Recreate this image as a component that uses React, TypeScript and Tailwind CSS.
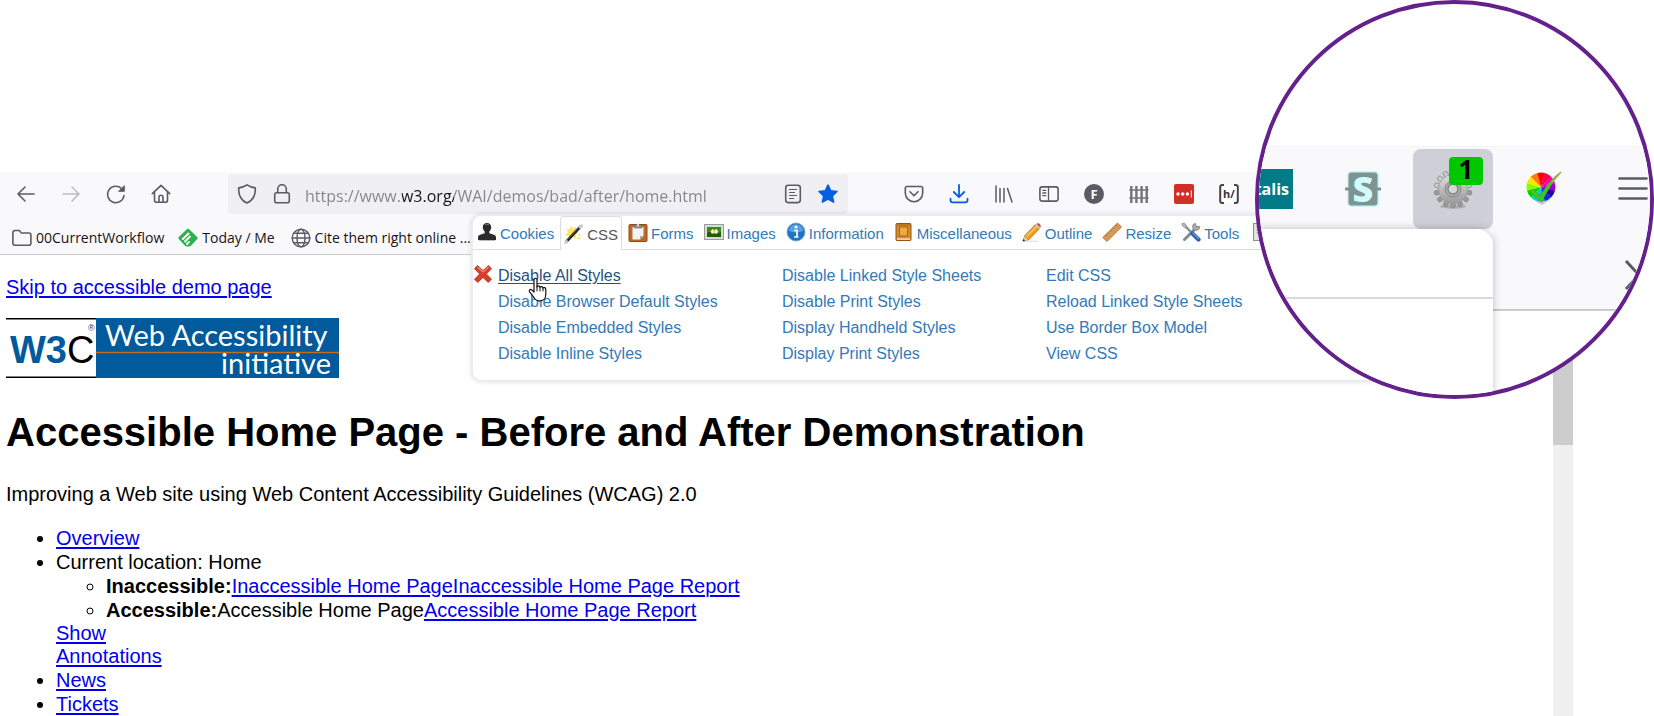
import type { ReactNode } from "react";

const LINE = "#5b5b66";

function Stroke({ children, color = LINE, size = 20, width = 1.6 }: { children: ReactNode; color?: string; size?: number; width?: number }) {
  return (
    <svg width={size} height={size} viewBox="0 0 20 20" fill="none" stroke={color} strokeWidth={width} strokeLinecap="round" strokeLinejoin="round" aria-hidden="true">
      {children}
    </svg>
  );
}

function IconButton({ label, children }: { label: string; children: ReactNode }) {
  return (
    <button type="button" aria-label={label} className="flex h-10 w-[45px] shrink-0 items-center justify-center">
      {children}
    </button>
  );
}

const tabs: { name: string; icon: ReactNode }[] = [
  {
    name: "Cookies",
    icon: (
      <svg width="20" height="20" viewBox="0 0 20 20" aria-hidden="true">
        <path d="M10 1c2.600 0 4.200 1.800 4.200 4.200 0 2-1 3.300-1.900 4.400v1.600l4.700 1.500c1.200.4 2 1.300 2 2.600V18H1v-2.700c0-1.300.8-2.200 2-2.600l4.700-1.500V9.600C6.800 8.500 5.800 7.200 5.800 5.200 5.800 2.800 7.400 1 10 1z" fill="#2b2b2b" />
        <path d="M8 3c1-.9 3-.9 4 0" stroke="#777" fill="none" />
        <path d="M2 18.500h16" stroke="#bbb" />
      </svg>
    ),
  },
  {
    name: "CSS",
    icon: (
      <svg width="20" height="20" viewBox="0 0 20 20" aria-hidden="true">
        <path d="M7 1l1.600 3.500L12 3l-.5 4 3.500 2-3.500 1.500 1 4-4-1.500L5 16l-.3-4L1 11l3-2.200L2.500 5 6 5.500z" fill="#ffe45c" />
        <path d="M15 10l1.500 2.500M13 14l3 1" stroke="#ffd22e" />
        <path d="M2 18L16.500 2.500" stroke="#222" strokeWidth="2.800" />
        <path d="M2.500 16.500L15 3" stroke="#888" strokeWidth=".7" />
        <path d="M15 4l3.500-3.200M1 19.300l2.500-2.800" stroke="#c9c9c9" strokeWidth="2.800" />
      </svg>
    ),
  },
  {
    name: "Forms",
    icon: (
      <svg width="20" height="20" viewBox="0 0 20 20" aria-hidden="true">
        <rect x="1" y="2.500" width="18" height="17" rx="1" fill="#b86a28" stroke="#8f4c18" />
        <path d="M4.500 5h11v9l-3.500 3.500H4.500z" fill="#f3f3f1" />
        <path d="M12 17.500V14h3.500z" fill="#aaa" />
        <path d="M6 6V3.500h2.200a1.900 1.900 0 013.600 0H14V6z" fill="#9a9a98" stroke="#666" strokeWidth=".6" />
        <circle cx="10" cy="3" r=".9" fill="#fff" />
      </svg>
    ),
  },
  {
    name: "Images",
    icon: (
      <svg width="20" height="20" viewBox="0 0 20 20" aria-hidden="true">
        <rect x=".5" y="2.500" width="19" height="15" fill="#d9dbd6" stroke="#9b9d98" />
        <rect x="3" y="5" width="14" height="10" fill="#3f8a1c" />
        <path d="M3 11c4-3 9 3 14-1v5H3z" fill="#1f5d0c" />
        <path d="M6.500 9.500l2-2.500 1.800 1.300L12.500 7l1.800 2.500-1.500 2.300-2.500-.6-2.500.6z" fill="#f5f5ec" />
        <circle cx="10.300" cy="9.500" r="1.200" fill="#e8d23a" />
      </svg>
    ),
  },
  {
    name: "Information",
    icon: (
      <svg width="20" height="20" viewBox="0 0 20 20" aria-hidden="true">
        <circle cx="10" cy="10" r="9" fill="#1d73c4" stroke="#7fa6cc" />
        <path d="M2.500 8.500a7.600 7.600 0 0115 0c-4 2.500-11 2.500-15 0z" fill="#5aa0e0" />
        <circle cx="10" cy="5" r="1.500" fill="#fff" />
        <path d="M8 8.500h3v6.500M8 15h4.500" stroke="#fff" strokeWidth="1.700" fill="none" />
      </svg>
    ),
  },
  {
    name: "Miscellaneous",
    icon: (
      <svg width="20" height="20" viewBox="0 0 20 20" aria-hidden="true">
        <rect x="2" y="1.500" width="15" height="17" rx="1" fill="#d08a30" stroke="#935510" />
        <path d="M3 17h13" stroke="#f7ead2" strokeWidth="1.400" />
        <rect x="5.500" y="5" width="8" height="9" fill="#eda944" stroke="#a96512" />
        <path d="M3 3h13" stroke="#a96512" />
      </svg>
    ),
  },
  {
    name: "Outline",
    icon: (
      <svg width="20" height="20" viewBox="0 0 20 20" aria-hidden="true">
        <path d="M2 19.300h14" stroke="#ddd" />
        <path d="M2.500 14L13.500 2.500l4 4L6.500 18z" fill="#f59a1d" stroke="#b96b0c" strokeWidth=".8" />
        <path d="M4.500 14.500l11-11" stroke="#ffd07a" strokeWidth="1.300" />
        <path d="M2.500 14l4 4L.8 19.300z" fill="#ead2a6" stroke="#a98245" strokeWidth=".5" />
        <path d="M1.500 17l1.500 1.500-2.400.9z" fill="#222" />
        <path d="M13 3l1.300-1.300 4 4L17 7z" fill="#c3c9cc" />
        <path d="M14.300 1.700C16 0 20 2.500 18.300 5.700z" fill="#d94848" />
      </svg>
    ),
  },
  {
    name: "Resize",
    icon: (
      <svg width="20" height="20" viewBox="0 0 20 20" aria-hidden="true">
        <path d="M.8 15.500L15.500 1l4 4L5 19.500z" fill="#d99a55" stroke="#a9682a" strokeWidth=".8" />
        <path d="M3.500 13l1.300 1.300M6 10.500l1 1M8.500 8l1.300 1.300M11 5.500l1 1M13.500 3l1.300 1.300" stroke="#8a5220" strokeWidth=".8" />
      </svg>
    ),
  },
  {
    name: "Tools",
    icon: (
      <svg width="20" height="20" viewBox="0 0 20 20" aria-hidden="true">
        <path d="M16 5L3.500 17.500" stroke="#848a8b" strokeWidth="3" strokeLinecap="round" />
        <path d="M18.700 4.500a3.600 3.600 0 11-4.300-3.200l.4 2.700 1.800.6z" fill="#a8acad" stroke="#6c7071" strokeWidth=".6" />
        <path d="M3 3l8 8" stroke="#888d8e" strokeWidth="2.400" />
        <path d="M1 1.500l2.500-.3L6 4.500 4.500 6 1.200 3.600z" fill="#b8bcbd" stroke="#6c7071" strokeWidth=".6" />
        <path d="M11.500 11.500l6 6" stroke="#2a5fae" strokeWidth="4.200" strokeLinecap="round" />
        <path d="M12 11l5.500 5.500" stroke="#6f9fdc" strokeWidth="1.200" strokeLinecap="round" />
      </svg>
    ),
  },
];

const commands = [
  ["Disable All Styles", "Disable Browser Default Styles", "Disable Embedded Styles", "Disable Inline Styles"],
  ["Disable Linked Style Sheets", "Disable Print Styles", "Display Handheld Styles", "Display Print Styles"],
  ["Edit CSS", "Reload Linked Style Sheets", "Use Border Box Model", "View CSS"],
];

function HandCursor() {
  return (
    <svg className="pointer-events-none absolute top-[10px] left-[30px] z-10" width="20" height="25" viewBox="0 0 20 25" aria-hidden="true">
      <path
        d="M6 15V3.200C6 .6 9 .6 9 3.200V10c.2-1.700 2.900-1.500 3 .4.500-1.400 2.800-1 2.900.8.600-1.200 2.900-.8 2.900 1.200V17c0 4-2.300 6.800-5.600 6.800H11c-2.500 0-4-1.300-5.200-3.500L1.500 14.700c-.8-1.500.9-2.900 2.300-1.800z"
        fill="#fff"
        stroke="#111"
        strokeWidth="1.200"
        strokeLinejoin="round"
      />
      <path d="M9 9.500V14M12 10.500V14M15 11.500V14" stroke="#111" strokeWidth="1" strokeLinecap="round" />
    </svg>
  );
}

function DeveloperPanel() {
  return (
    <section
      aria-label="Web Developer"
      className="absolute top-[42px] left-[471px] z-10 w-[960px] rounded-[10px] border-2 border-[#ececf0] bg-white pb-[13px] font-['Liberation_Sans',Arial,sans-serif] shadow-[0_0_5px_rgba(0,0,0,0.12)]"
    >
      <div role="tablist" className="flex h-[34px] items-end gap-[2px] border-b border-[#ddd]">
        {tabs.map((tab) => {
          const active = tab.name === "CSS";
          return (
            <button
              key={tab.name}
              type="button"
              role="tab"
              aria-selected={active}
              className={
                active
                  ? "-mb-px flex h-[34px] shrink-0 items-center gap-[3px] rounded-t-[4px] border border-b-0 border-[#ddd] bg-white px-[3px] text-[15px] text-[#555]"
                  : "flex h-[34px] shrink-0 items-center gap-[3px] border border-transparent px-[3px] text-[15px] text-[#337ab7]"
              }
            >
              {tab.icon}
              <span className="pt-1">{tab.name}</span>
            </button>
          );
        })}
        <button type="button" role="tab" aria-selected={false} aria-label="View Source" className="flex h-[34px] shrink-0 items-center pl-2">
          <svg width="20" height="20" viewBox="0 0 20 20" aria-hidden="true">
            <rect x=".5" y="1.500" width="15" height="17" fill="#e2e2e2" stroke="#8d8d8d" />
            <path d="M3.500 5h9M3.500 8h9M3.500 11h9" stroke="#999" />
          </svg>
        </button>
      </div>
      <div className="relative grid grid-cols-[284px_264px_1fr] pt-[13px] pl-[25px] text-[16px] leading-[26px]">
        <svg className="absolute top-[14px] left-0" width="20" height="20" viewBox="0 0 20 20" aria-hidden="true">
          <path d="M4.500 1.500L10 6.500l5.500-5 3 3.300L13.300 10l5.200 5.200-3.200 3.200L10 13.400l-5.300 5-3.200-3.200L6.700 10 1.500 4.800z" fill="#d6402a" stroke="#a82414" strokeWidth=".8" />
          <path d="M4.500 3l5.500 5 5.500-5" stroke="#f08a76" strokeWidth="1.200" fill="none" />
        </svg>
        {commands.map((column) => (
          <ul key={column[0]}>
            {column.map((command) => (
              <li key={command}>
                {command === "Disable All Styles" ? (
                  <a href="#disable" className="relative text-[#23527c] underline underline-offset-2">
                    {command}
                    <HandCursor />
                  </a>
                ) : (
                  <a href="#command" className="text-[#337ab7]">
                    {command}
                  </a>
                )}
              </li>
            ))}
          </ul>
        ))}
      </div>
    </section>
  );
}

function NavigationBar() {
  return (
    <div className="flex h-[44px] items-center bg-[#f9f9fb] pl-[3px]">
      <IconButton label="Back">
        <Stroke><path d="M18 10H2M9 3l-7 7 7 7" /></Stroke>
      </IconButton>
      <IconButton label="Forward">
        <Stroke color="#bdbdc2"><path d="M2 10h16M11 3l7 7-7 7" /></Stroke>
      </IconButton>
      <IconButton label="Reload">
        <Stroke>
          <path d="M18 11.500A8.200 8.200 0 1115.500 4.500" />
          <path d="M18.300 2v5.300H13z" fill={LINE} strokeWidth="1" />
        </Stroke>
      </IconButton>
      <IconButton label="Home">
        <Stroke>
          <path d="M1.300 9.700L10 1.300l8.700 8.400M3.500 8v8.200a2 2 0 002 2h9a2 2 0 002-2V8M8 18v-4.700a2 2 0 014 0V18" />
        </Stroke>
      </IconButton>
      <div className="ml-[45px] flex h-10 w-[620px] shrink-0 items-center rounded bg-[#f0f0f4]">
        <button type="button" aria-label="Tracking protection" className="ml-[9px]">
          <Stroke><path d="M10 .9c2.500 1.800 5 2.600 8.300 3 .4 7-2.300 12.500-8.300 15.200C4 16.400 1.300 10.900 1.700 3.900 5 3.500 7.500 2.700 10 .9z" /></Stroke>
        </button>
        <button type="button" aria-label="Site information" className="ml-[15px]">
          <Stroke>
            <rect x="2.700" y="8.700" width="14.600" height="10" rx="2" />
            <path d="M5.700 8.500V5a4.300 4.300 0 018.600 0v3.500" />
          </Stroke>
        </button>
        <input
          aria-label="Address"
          defaultValue="https://www.w3.org/WAI/demos/bad/after/home.html"
          className="ml-[13px] min-w-0 flex-1 bg-[linear-gradient(90deg,#84848c_97px,#15141a_97px,#15141a_149px,#84848c_149px)] bg-clip-text pt-[3px] font-['Open_Sans','Noto_Sans',sans-serif] text-[16px] text-transparent outline-none"
        />
        <button type="button" aria-label="Reader view" className="mr-[15px]">
          <Stroke>
            <rect x="2.700" y="1.200" width="14.600" height="17.400" rx="2.500" />
            <path d="M6.500 5.500h7M6.500 8.500h5M6.500 11.500h7M6.500 14.500h4" strokeWidth="1.200" />
          </Stroke>
        </button>
        <button type="button" aria-label="Bookmark this page" className="mr-[10px]">
          <Stroke color="#0060df"><path d="M10 1l2.700 5.800 6.300.7-4.700 4.300 1.300 6.300L10 15l-5.600 3.100 1.300-6.300L1 7.500l6.300-.7z" fill="#0060df" /></Stroke>
        </button>
      </div>
      <div className="ml-[43px] flex">
        <IconButton label="Save to Pocket">
          <Stroke>
            <path d="M3 2.500h14c1 0 1.700.7 1.700 1.700V9a8.700 8.700 0 01-17.400 0V4.200c0-1 .7-1.700 1.700-1.700z" />
            <path d="M6 7.700l4 4 4-4" />
          </Stroke>
        </IconButton>
        <IconButton label="Downloads">
          <Stroke color="#0060df" width={1.800}>
            <path d="M10 .9v12M4.800 8l5.200 5.200L15.200 8M1.500 14.700v1.500c0 1.200.8 2.100 2.100 2.100h12.800c1.300 0 2.100-.9 2.100-2.100v-1.500" />
          </Stroke>
        </IconButton>
        <IconButton label="Library">
          <Stroke width={1.500}><path d="M2 2v16M6 4.500V18M10 4.500V18M13.500 4.500l4.500 13.500" /></Stroke>
        </IconButton>
        <IconButton label="Sidebars">
          <Stroke>
            <rect x=".9" y="2.900" width="18.200" height="14.200" rx="2.300" />
            <path d="M9.500 3v14M3.800 6.300h3M3.800 9h3M3.800 11.700h3" strokeWidth="1.300" />
          </Stroke>
        </IconButton>
        <IconButton label="Font inspector">
          <svg width="20" height="20" viewBox="0 0 20 20" aria-hidden="true">
            <circle cx="10" cy="10" r="10" fill={LINE} />
            <text x="10" y="14.800" textAnchor="middle" fontFamily="Open Sans, sans-serif" fontWeight="700" fontSize="13" fill="#fff">F</text>
          </svg>
        </IconButton>
        <IconButton label="Grid">
          <Stroke color="#757575" width={1.900}><path d="M2.300 2v17M7.400 2v17M12.600 2v17M17.700 2v17" strokeLinecap="butt" strokeWidth="2.400" /><path d="M.8 6h18.400M.8 14h18.400" strokeWidth="1.300" /></Stroke>
        </IconButton>
        <IconButton label="Password manager">
          <svg width="20" height="20" viewBox="0 0 20 20" aria-hidden="true">
            <rect width="20" height="20" rx="2" fill="#d32d27" />
            <circle cx="4" cy="10" r="1.700" fill="#fff" />
            <circle cx="8.700" cy="10" r="1.700" fill="#fff" />
            <circle cx="13.400" cy="10" r="1.700" fill="#fff" />
            <path d="M17.300 6.500v7" stroke="#fff" strokeWidth="1" />
          </svg>
        </IconButton>
        <IconButton label="HeadingsMap">
          <svg width="20" height="20" viewBox="0 0 20 20" aria-hidden="true">
            <rect x="2" y="1" width="16" height="18" fill="#fff" />
            <path d="M5 1H3.500C2 1 1.200 1.800 1.200 3.300v13.400C1.200 18.200 2 19 3.500 19H5M15 1h1.500c1.500 0 2.300.8 2.300 2.300v13.400c0 1.500-.8 2.300-2.300 2.300H15" fill="none" stroke="#444" strokeWidth="2" />
            <text x="10" y="14" textAnchor="middle" fontFamily="Open Sans, sans-serif" fontWeight="700" fontSize="11" fill="#333">h/</text>
          </svg>
        </IconButton>
      </div>
    </div>
  );
}

function BookmarksBar() {
  return (
    <nav aria-label="Bookmarks" className="flex h-[39px] items-center border-b border-[#cccccf] bg-[#f9f9fb] pt-[5px] pl-3 font-['Open_Sans','Noto_Sans',sans-serif] text-[14px] text-[#15141a]">
      <a href="#workflow" className="flex items-center gap-1 whitespace-nowrap">
        <Stroke><path d="M.9 4.500a2 2 0 012-2h4.300L9.500 5h7.400a2 2 0 012 2v8.300a2 2 0 01-2 2h-14a2 2 0 01-2-2z" /></Stroke>
        00CurrentWorkflow
      </a>
      <a href="#today" className="ml-[14px] flex items-center gap-1 whitespace-nowrap">
        <svg width="20" height="20" viewBox="0 0 20 20" aria-hidden="true">
          <path d="M8.600 1.400a2 2 0 012.800 0l7.800 7.700a1.300 1.300 0 010 1.800L13 17.800a3 3 0 01-2 .8H9a3 3 0 01-2-.8L.8 10.900a1.300 1.300 0 010-1.800z" fill="#2bb24c" />
          <path d="M4.800 11L10.500 5.500M7 13.500l5-5M9 16l2-2" stroke="#fff" strokeWidth="1.900" strokeLinecap="round" />
        </svg>
        Today / Me
      </a>
      <a href="#cite" className="ml-[16px] flex items-center gap-1 whitespace-nowrap">
        <Stroke width={1.400}>
          <circle cx="10" cy="10" r="8.800" />
          <ellipse cx="10" cy="10" rx="4" ry="8.800" />
          <path d="M1.200 10h17.600M2.800 5.300h14.400M2.800 14.700h14.400" />
        </Stroke>
        Cite them right online ...
      </a>
    </nav>
  );
}

function WaiLogo() {
  return (
    <svg className="mt-[19px] block" width="333" height="60" viewBox="0 0 333 60" role="img" aria-label="W3C Web Accessibility initiative">
      <rect width="333" height="60" fill="#fff" />
      <path d="M0 .7h90M0 59.300h90" stroke="#000" strokeWidth="1.400" />
      <rect x="90" width="243" height="60" fill="#005a9c" />
      <path d="M90 34.500h243" stroke="#c96a14" strokeWidth="1.500" />
      <text x="4" y="45" fontFamily="Liberation Sans, Arial, sans-serif" fontSize="38" fontWeight="700" fill="#005a9c">
        W3<tspan fontWeight="400" fill="#000">C</tspan>
      </text>
      <text x="82" y="13" fontFamily="Liberation Sans, sans-serif" fontSize="9" fill="#333">®</text>
      <g fontFamily="Lato, sans-serif" fontSize="29" fill="#fff">
        <text x="99" y="28">Web Accessibility</text>
        <text x="325" y="56" textAnchor="end">initiative</text>
      </g>
    </svg>
  );
}

const link = "text-[#0000ee] underline underline-offset-2";

function DemoPage() {
  return (
    <main className="min-w-0 flex-1 pt-5 pl-[6px] font-['Liberation_Sans',Arial,sans-serif] text-[20px] leading-[24px] text-black">
      <a href="#page" className={`block w-fit ${link}`}>Skip to accessible demo page</a>
      <WaiLogo />
      <h1 className="mt-[31px] text-[40px] leading-[46px] font-bold">Accessible Home Page - Before and After Demonstration</h1>
      <p className="mt-[27px]">Improving a Web site using Web Content Accessibility Guidelines (WCAG) 2.0</p>
      <ul className="mt-5 list-disc pl-[50px]">
        <li><a href="#overview" className={link}>Overview</a></li>
        <li>
          Current location: Home
          <ul className="list-[circle] pl-[50px]">
            <li>
              <strong>Inaccessible:</strong>
              <a href="#before" className={link}>Inaccessible Home Page</a>
              <a href="#before-report" className={link}>Inaccessible Home Page Report</a>
            </li>
            <li>
              <strong>Accessible:</strong>Accessible Home Page
              <a href="#after-report" className={link}>Accessible Home Page Report</a>
            </li>
          </ul>
          <a href="#annotations" className={`block w-24 leading-[23px] ${link}`}>Show Annotations</a>
        </li>
        <li><a href="#news" className={link}>News</a></li>
        <li><a href="#tickets" className={link}>Tickets</a></li>
      </ul>
    </main>
  );
}

const wheel = ["#f00", "#ff7a00", "#ffe600", "#8f0", "#00d000", "#00d890", "#00b0e0", "#0030e0", "#3000a0", "#a000d0", "#ff00c0", "#ff0050"].reverse();

function wheelSlice(index: number) {
  const start = ((index * 30 - 75) * Math.PI) / 180;
  const end = ((index * 30 - 44) * Math.PI) / 180;
  return `M15 16L${15 + 14.5 * Math.cos(start)} ${16 + 14.5 * Math.sin(start)}A14.500 14.500 0 0 1 ${15 + 14.5 * Math.cos(end)} ${16 + 14.5 * Math.sin(end)}z`;
}

function Magnifier() {
  const slot = "flex h-20 w-20 shrink-0 items-center justify-center";
  return (
    <aside aria-label="Magnified toolbar" className="absolute top-0 right-0 z-20 flex h-[399px] w-[399px] flex-col overflow-hidden rounded-full border-4 border-[#64218c] bg-white pt-[142px]">
      <div className="flex h-[83px] shrink-0 justify-center border-t border-[#f4f4f6] bg-[#f9f9fb] pt-[2px] pr-[3px]">
        <div className="flex shrink-0 gap-[10px]">
          <button type="button" className={slot}>
            <span className="flex h-10 w-10 items-center justify-end bg-[#007b87] pr-1 font-['Open_Sans',sans-serif] text-[16px] font-bold text-white">talis</span>
          </button>
          <button type="button" aria-label="Stylus" className={slot}>
            <svg width="38" height="40" viewBox="0 0 38 40" aria-hidden="true">
              <rect x="3" y="2" width="32" height="36" rx="4" fill="#c9f6f6" />
              <path d="M1 20h36" stroke="#7d9492" strokeWidth="3" />
              <rect x="4.500" y="3.500" width="29" height="33" rx="3" fill="#7d9492" />
              <text x="19" y="33" textAnchor="middle" fontFamily="Open Sans, sans-serif" fontWeight="800" fontSize="36" fill="#d2fbfb">S</text>
            </svg>
          </button>
          <button type="button" aria-label="Web Developer, 1 active" className={`relative rounded-lg bg-[#cfcfd8] ${slot}`}>
            <svg width="40" height="40" viewBox="0 0 40 40" aria-hidden="true">
              <defs>
                <linearGradient id="metal" x1="0" y1="0" x2="0" y2="1">
                  <stop offset="0" stopColor="#dedede" />
                  <stop offset="1" stopColor="#9a9a9a" />
                </linearGradient>
              </defs>
              <ellipse cx="20" cy="37.500" rx="13" ry="2" fill="#aaaab2" />
              {Array.from({ length: 14 }, (_, i) => (
                <rect key={i} x="17.800" y="1" width="4.400" height="8" rx="1.500" fill={i > 3 && i < 11 ? "#9a9a9a" : "#c9c9c9"} stroke="#858585" strokeWidth=".7" transform={`rotate(${(i * 360) / 14} 20 20)`} />
              ))}
              <circle cx="20" cy="20" r="14.500" fill="url(#metal)" stroke="#999" strokeWidth=".8" />
              <circle cx="20" cy="20" r="8" fill="#a9a9a9" stroke="#8a8a8a" />
              <circle cx="20" cy="20" r="5" fill="#d5d5da" stroke="#858585" strokeWidth="1.400" />
            </svg>
            <span className="absolute top-2 right-[10px] flex h-7 w-[34px] items-start justify-center rounded bg-[#00c800] font-['Open_Sans',sans-serif] text-[26px] leading-6 font-bold text-black">1</span>
          </button>
          <button type="button" aria-label="Colour contrast checker" className={slot}>
            <svg className="ml-1" width="38" height="36" viewBox="0 0 38 36" aria-hidden="true">
              <path d="M6 28h19l-9 6z" fill="#c8c8cc" />
              {wheel.map((fill, i) => (
                <path key={fill} d={wheelSlice(i)} fill={fill} />
              ))}
              <path d="M4 20l3-2 7 8C20 15 26 7 35 1 27 10 21 20 15.500 31z" fill="#3ecb1f" stroke="#6b9c2a" strokeWidth=".8" />
              <path d="M26 11L35 1" stroke="#b9ab63" strokeWidth="1.500" />
            </svg>
          </button>
          <button type="button" aria-label="Menu" className={slot}>
            <svg width="30" height="24" viewBox="0 0 30 24" stroke={LINE} strokeWidth="2.600" strokeLinecap="round" aria-hidden="true">
              <path d="M1.500 1.500h27M1.500 11.500h27M1.500 21.500h27" />
            </svg>
          </button>
        </div>
      </div>
      <div className="flex flex-1">
        <div className="z-10 w-[234px] rounded-tr-[16px] bg-white shadow-[0_0_8px_rgba(0,0,0,0.25)]">
          <div className="h-[70px] border-b-2 border-[#dadada]" />
        </div>
        <div className="flex-1">
          <div className="-mt-px flex h-[83px] items-end justify-end border-b-2 border-[#cbcbcd] bg-[#f9f9fb] pr-[9px] pb-4">
            <svg width="17" height="34" viewBox="0 0 17 34" fill="none" stroke={LINE} strokeWidth="3" aria-hidden="true">
              <path d="M2 2l13 14L2 30" />
            </svg>
          </div>
        </div>
      </div>
    </aside>
  );
}

export default function App() {
  return (
    <div className="relative flex min-h-screen flex-col overflow-hidden bg-white pt-[172px]">
      <div className="relative mr-[81px] flex flex-1 flex-col">
        <NavigationBar />
        <BookmarksBar />
        <DeveloperPanel />
        <div className="flex flex-1">
          <DemoPage />
          <div className="w-5 shrink-0 bg-[#f0f0f0]">
            <div className="h-[190px] bg-[#cdcdcd]" />
          </div>
        </div>
      </div>
      <Magnifier />
    </div>
  );
}
